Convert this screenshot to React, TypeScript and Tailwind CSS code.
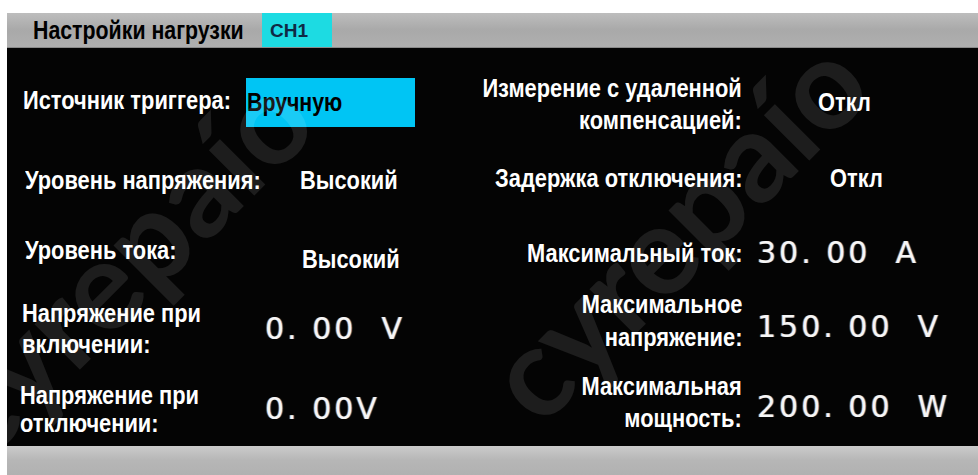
import React from 'react';

const face = "font-['Liberation_Sans_Narrow','Liberation_Sans',Arial,sans-serif] font-bold text-[26px]";
const reading = "font-['DejaVu_Sans',Verdana,sans-serif] text-[30px] tracking-[3px] text-[#f6f6f6] whitespace-pre leading-none [text-shadow:-1px_0_0_rgba(255,170,80,0.45),1px_0_0_rgba(90,170,255,0.5)]";

// Narrow bold caption: the panel uses a condensed face, so the glyphs are squeezed horizontally.
function Caption({
  children,
  right = false,
  tight = false,
  className = '',
}: {
  children: React.ReactNode;
  right?: boolean;
  tight?: boolean;
  className?: string;
}) {
  return (
    <span
      className={`${face} inline-block whitespace-nowrap ${tight ? 'scale-x-[0.82]' : 'scale-x-[0.84]'} ${right ? 'origin-right text-right' : 'origin-left'} ${className}`}
    >
      {children}
    </span>
  );
}

export default function App() {
  return (
    <div className="relative w-[978px] h-[475px] bg-white pt-[13px] pl-[7px] flex flex-col overflow-hidden">
      {/* title bar */}
      <div className="h-[35px] flex bg-gradient-to-b from-[#bdbdbd] via-[#a9a9a9] to-[#afafaf] border-b border-[#8a8a8a]">
        <div className="w-[255px] shrink-0 pl-[26px] flex items-center">
          <Caption tight className="text-black leading-none">Настройки нагрузки</Caption>
        </div>
        <div className="w-[70px] h-full bg-[#1ddbe2] flex items-center pl-[8px]">
          <span className="font-['Liberation_Sans',Arial,sans-serif] font-bold text-[19px] text-[#0f2a45] leading-none">CH1</span>
        </div>
      </div>

      {/* settings panel */}
      <div className="h-[398px] bg-[#040404] flex overflow-hidden text-white">
        {/* left column */}
        <div className="w-[463px] shrink-0 flex flex-col">
          <div className="mt-[24px] h-[60px] flex items-center">
            <div className="w-[239px] shrink-0 pl-[16px] pb-[4px]">
              <Caption>Источник триггера:</Caption>
            </div>
            <div className="w-[169px] h-[49px] bg-[#00c5f4] flex items-center pl-[1px]">
              <Caption tight className="text-black">Вручную</Caption>
            </div>
          </div>
          <div className="mt-[18px] h-[60px] flex items-center">
            <div className="w-[239px] shrink-0 pl-[18px]">
              <Caption>Уровень напряжения:</Caption>
            </div>
            <div className="ml-[54px]">
              <Caption>Высокий</Caption>
            </div>
          </div>
          <div className="mt-[14px] h-[60px] flex items-center">
            <div className="w-[239px] shrink-0 pl-[18px] pb-[8px]">
              <Caption>Уровень тока:</Caption>
            </div>
            <div className="ml-[56px] pt-[10px]">
              <Caption>Высокий</Caption>
            </div>
          </div>
          <div className="mt-[15px] h-[60px] flex items-center">
            <div className="w-[239px] shrink-0 pl-[15px]">
              <Caption className="leading-[31px]">
                Напряжение при
                <br />
                включении:
              </Caption>
            </div>
            <div className={`${reading} ml-[19px]`}>{'0. 00  V'}</div>
          </div>
          <div className="mt-[20px] h-[60px] flex items-center">
            <div className="w-[239px] shrink-0 pl-[13px]">
              <Caption className="leading-[28px]">
                Напряжение при
                <br />
                отключении:
              </Caption>
            </div>
            <div className={`${reading} ml-[19px]`}>{'0. 00V'}</div>
          </div>
        </div>

        {/* right column */}
        <div className="flex-1 flex flex-col">
          <div className="mt-[24px] h-[64px] flex items-center">
            <div className="w-[272px] shrink-0 flex justify-end">
              <Caption right className="leading-[32px]">
                Измерение с удаленной
                <br />
                компенсацией:
              </Caption>
            </div>
            <div className="ml-[76px] pb-[4px]">
              <Caption>Откл</Caption>
            </div>
          </div>
          <div className="mt-[10px] h-[64px] flex items-center">
            <div className="w-[272px] shrink-0 flex justify-end">
              <Caption right>Задержка отключения:</Caption>
            </div>
            <div className="ml-[88px]">
              <Caption>Откл</Caption>
            </div>
          </div>
          <div className="mt-[11px] h-[64px] flex items-center">
            <div className="w-[272px] shrink-0 flex justify-end">
              <Caption right>Максимальный ток:</Caption>
            </div>
            <div className={`${reading} ml-[15px]`}>{'30. 00  A'}</div>
          </div>
          <div className="mt-[4px] h-[64px] flex items-center">
            <div className="w-[272px] shrink-0 flex justify-end">
              <Caption right className="leading-[33px]">
                Максимальное
                <br />
                напряжение:
              </Caption>
            </div>
            <div className={`${reading} ml-[15px] pt-[12px]`}>{'150. 00  V'}</div>
          </div>
          <div className="mt-[17px] h-[64px] flex items-center">
            <div className="w-[272px] shrink-0 flex justify-end">
              <Caption right className="leading-[32px]">
                Максимальная
                <br />
                мощность:
              </Caption>
            </div>
            <div className={`${reading} ml-[15px] pt-[10px]`}>{'200. 00  W'}</div>
          </div>
        </div>
      </div>

      {/* bottom strip */}
      <div className="flex-1 bg-gradient-to-b from-[#cbcbcb] via-[#b6b6b6] to-[#b1b1b1]" />

      {/* watermark */}
      <div className="pointer-events-none absolute inset-0">
        <span className="absolute left-[-160px] top-[200px] w-[560px] text-center -rotate-45 font-['Lato',sans-serif] font-bold text-[125px] leading-none text-white/10">
          cyrepaío
        </span>
        <span className="absolute left-[395px] top-[165px] w-[560px] text-center -rotate-45 font-['Lato',sans-serif] font-bold text-[125px] leading-none text-white/10">
          cyrepaío
        </span>
      </div>
    </div>
  );
}
